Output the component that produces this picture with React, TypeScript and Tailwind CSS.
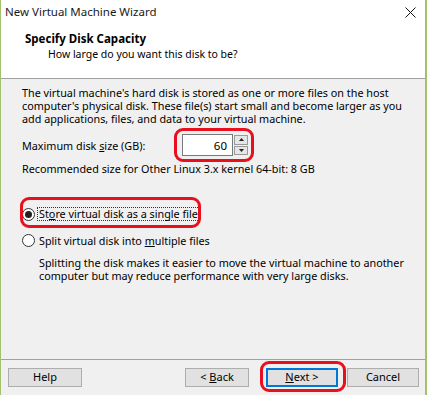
import React from "react";

const font = { fontFamily: '"Noto Sans", "Open Sans", sans-serif' };

function Radio({ checked }: { checked?: boolean }) {
  return (
    <span className="w-[13px] h-[13px] rounded-full border border-[#333] bg-white flex items-center justify-center shrink-0">
      {checked && <span className="w-[7px] h-[7px] rounded-full bg-[#222]" />}
    </span>
  );
}

function Btn({ children, w, focus }: { children: React.ReactNode; w: string; focus?: boolean }) {
  return (
    <div
      className={`${w} h-[19px] flex items-center justify-center text-[11px] text-black bg-[#e1e1e1] border ${
        focus ? "border-[#0078d7] outline outline-1 outline-[#0078d7] -outline-offset-2" : "border-[#adadad]"
      }`}
    >
      <span className="whitespace-pre">{children}</span>
    </div>
  );
}

export default function App() {
  return (
    <div className="w-[428px] h-[395px] bg-white" style={font}>
      <div className="relative w-[427px] h-[395px] border-l border-r-2 border-[#a3c16e] bg-[#f0f0f0] flex flex-col">
        {/* title bar */}
        <div className="h-[24px] bg-white flex items-center justify-between pl-[4px] pr-[8px]">
          <span className="text-[11.5px] text-[#1a1a1a]">New Virtual Machine Wizard</span>
          <svg width="11" height="11" viewBox="0 0 11 11" className="mr-[1px]">
            <path d="M0.5 0.5 L10.5 10.5 M10.5 0.5 L0.5 10.5" stroke="#111" strokeWidth="1" />
          </svg>
        </div>
        {/* header */}
        <div className="h-[55px] bg-white border-b border-[#a0a0a0] flex flex-col">
          <div className="pl-[24px] pt-[7px] text-[11.5px] font-bold leading-[16px] text-black">Specify Disk Capacity</div>
          <div className="pl-[47px] mt-[1px] text-[10.5px] leading-[13px] text-black">How large do you want this disk to be?</div>
        </div>
        {/* body */}
        <div className="h-[281px] flex flex-col pl-[21px] text-[10.8px] leading-[13px] text-black border-b border-[#a0a0a0]">
          <div className="pt-[7px]">
            <div>The virtual machine's hard disk is stored as one or more files on the host</div>
            <div>computer's physical disk. These file(s) start small and become larger as you</div>
            <div>add applications, files, and data to your virtual machine.</div>
          </div>
          <div className="mt-[9px] h-[22px] flex items-center">
            <span className="w-[160px]">
              Maximum disk <u>s</u>ize (GB):
            </span>
            <div className="w-[51px] h-[22px] bg-white border border-[#7a7a7a] flex items-center justify-end pr-[5px] text-[11.5px]">
              60
            </div>
            <div className="ml-[1px] w-[14px] h-[20px] flex flex-col gap-[1px]">
              <div className="flex-1 bg-[#e6e6e6] border border-[#9a9a9a] flex items-center justify-center">
                <svg width="5" height="3" viewBox="0 0 5 3"><path d="M2.5 0 L5 3 L0 3 Z" fill="#222" /></svg>
              </div>
              <div className="flex-1 bg-[#e6e6e6] border border-[#9a9a9a] flex items-center justify-center">
                <svg width="5" height="3" viewBox="0 0 5 3"><path d="M0 0 L5 0 L2.5 3 Z" fill="#222" /></svg>
              </div>
            </div>
          </div>
          <div className="mt-[6px]">Recommended size for Other Linux 3.x kernel 64-bit: 8 GB</div>
          <div className="mt-[31px] h-[16px] flex items-center">
            <Radio checked />
            <span className="ml-[2px] px-[1px] border border-dotted border-[#333] leading-[12px]">
              St<u>o</u>re virtual disk as a single file
            </span>
          </div>
          <div className="mt-[10px] h-[16px] flex items-center">
            <Radio />
            <span className="ml-[3px] pl-[1px]">
              Split virtual disk into <u>m</u>ultiple files
            </span>
          </div>
          <div className="mt-[8px] pl-[17px]">
            <div>Splitting the disk makes it easier to move the virtual machine to another</div>
            <div>computer but may reduce performance with very large disks.</div>
          </div>
        </div>
        {/* footer */}
        <div className="flex pt-[8px] pl-[7px]">
          <Btn w="w-[74px]">Help</Btn>
          <div className="ml-[103px]">
            <Btn w="w-[64px]">
              {"< "}
              <u>B</u>ack
            </Btn>
          </div>
          <div className="ml-[17px]">
            <Btn w="w-[72px]" focus>
              <u>N</u>
              {"ext >"}
            </Btn>
          </div>
          <div className="ml-[9px]">
            <Btn w="w-[72px]">Cancel</Btn>
          </div>
        </div>

        {/* red highlight overlays */}
        <div className="absolute left-[173px] top-[128px] w-[80px] h-[34px] border-[3px] border-[#e8101c] rounded-[9px]" />
        <div className="absolute left-[19px] top-[197px] w-[181px] h-[31px] border-[3px] border-[#e8101c] rounded-[9px]" />
        <div className="absolute left-[259px] top-[361px] w-[86px] h-[31px] border-[3px] border-[#e8101c] rounded-[9px]" />
      </div>
    </div>
  );
}
